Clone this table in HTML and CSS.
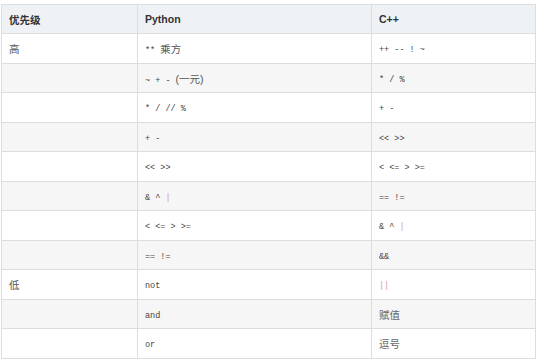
FILE: index.html
```html
<!DOCTYPE html>
<html lang="zh">
<head>
<meta charset="utf-8">
<link rel="stylesheet" href="styles.css">
</head>
<body>
<div class="wrap">
<table class="prec">
<colgroup><col class="c1"><col class="c2"><col class="c3"></colgroup>
<thead>
<tr><th>优先级</th><th>Python</th><th>C++</th></tr>
</thead>
<tbody>
<tr><td>高</td><td><code>** <span class="zh">乘方</span></code></td><td><code>++ -- ! ~</code></td></tr>
<tr><td></td><td><code>~ + - <span class="zh">(一元)</span></code></td><td><code>* / %</code></td></tr>
<tr><td></td><td><code>* / // %</code></td><td><code>+ -</code></td></tr>
<tr><td></td><td><code>+ -</code></td><td><code>&lt;&lt; &gt;&gt;</code></td></tr>
<tr><td></td><td><code>&lt;&lt; &gt;&gt;</code></td><td><code>&lt; &lt;= &gt; &gt;=</code></td></tr>
<tr><td></td><td><code>&amp; ^ <span class="pipe">|</span></code></td><td><code>== !=</code></td></tr>
<tr><td></td><td><code>&lt; &lt;= &gt; &gt;=</code></td><td><code>&amp; ^ <span class="pipe">|</span></code></td></tr>
<tr><td></td><td><code>== !=</code></td><td><code>&amp;&amp;</code></td></tr>
<tr><td>低</td><td><code>not</code></td><td><code><span class="pipe">||</span></code></td></tr>
<tr><td></td><td><code>and</code></td><td class="soft">赋值</td></tr>
<tr><td></td><td><code>or</code></td><td class="soft">逗号</td></tr>
</tbody>
</table>
</div>
</body>
</html>
```
FILE: styles.css
```css
html, body {
  margin: 0;
  padding: 0;
  background: #fff;
}
.wrap {
  padding: 4px 0 0 1px;
}
.prec {
  border-collapse: collapse;
  table-layout: fixed;
  width: 534px;
  font-family: "Liberation Sans", "Noto Sans CJK SC", sans-serif;
  font-size: 10.5px;
  color: #333;
}
.c1 { width: 136px; }
.c2 { width: 234px; }
.c3 { width: 164px; }
.prec th, .prec td {
  border: 1px solid #ddd;
  padding: 0 7px;
  text-align: left;
  vertical-align: middle;
  white-space: nowrap;
}
.prec th {
  height: 28px;
  background: #eff2f5;
  font-weight: bold;
}
.prec tbody tr:nth-child(odd) td { height: 29px; }
.prec tbody tr:nth-child(even) td { height: 28px; }
.prec tbody tr:nth-child(even) { background: #f6f6f6; }
.prec td { color: #555; }
.prec td.soft { color: #666; }
code {
  font-family: "Liberation Mono", "Noto Sans CJK SC", monospace;
  font-size: 8.5px;
  color: #444;
}
code .zh {
  font-family: "Liberation Sans", "Noto Sans CJK SC", sans-serif;
  font-size: 10.5px;
  color: #555;
}
.pipe { color: #d49a9a; }
```
